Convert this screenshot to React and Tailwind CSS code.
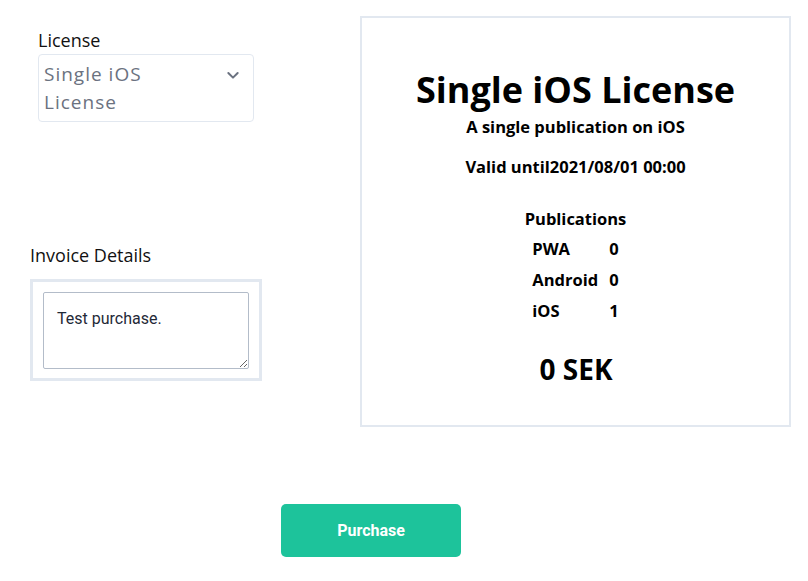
import React from 'react';

const rows = [
    { name: 'PWA', count: 0 },
    { name: 'Android', count: 0 },
    { name: 'iOS', count: 1 },
];

export default function App() {
    return (
        <div className="w-[808px] h-[581px] bg-white text-black font-['Open_Sans',sans-serif] relative">
            <div className="flex">
                {/* left column */}
                <div className="w-[232px] ml-[30px] pt-[28px]">
                    <label className="block pl-[8px] text-[18px] leading-[24px] text-[#111]">License</label>
                    <div className="ml-[8px] mt-[2px] w-[216px] h-[68px] border border-[#e2e8f0] rounded-[4px] flex items-start justify-between pl-[5px] pr-[12px] pt-[5px]">
                        <span className="text-[19px] leading-[28px] tracking-[1px] text-[#6b7280]">Single iOS<br />License</span>
                        <svg width="16" height="16" viewBox="0 0 24 24" fill="none" stroke="#6b7280" strokeWidth="3" strokeLinecap="round" strokeLinejoin="round" className="mt-[7px]">
                            <path d="M5 9l7 7 7-7" />
                        </svg>
                    </div>

                    <div className="mt-[121px] text-[18px] leading-[24px] text-[#111]">Invoice Details</div>
                    <div className="mt-[12px] w-[232px] h-[102px] border-[3px] border-[#e2e8f0] pt-[10px] pl-[10px]">
                        <textarea
                            defaultValue="Test purchase."
                            className="block w-[206px] h-[77px] border border-[#b3bcc9] rounded-[2px] px-[13px] py-[16px] text-[16px] leading-[20px] text-[#1f2937] font-['Roboto',sans-serif] outline-none resize-y"
                        />
                    </div>
                </div>

                {/* license card */}
                <div className="ml-[98px] mt-[16px] w-[431px] h-[411px] border-2 border-[#e2e8f0] flex flex-col items-center font-bold">
                    <h1 className="mt-[49px] text-[36px] leading-[46px]">Single iOS License</h1>
                    <p className="mt-[2px] text-[16.5px] leading-[24px]">A single publication on iOS</p>
                    <p className="mt-[16px] text-[16.5px] leading-[24px]">Valid until2021/08/01 00:00</p>
                    <p className="mt-[28px] text-[16.5px] leading-[24px]">Publications</p>
                    <div className="mt-[6px] flex flex-col gap-[7px] text-[16.5px] leading-[24px]">
                        {rows.map(r => (
                            <div key={r.name} className="flex">
                                <span className="w-[77px]">{r.name}</span>
                                <span>{r.count}</span>
                            </div>
                        ))}
                    </div>
                    <p className="mt-[28px] text-[28px] leading-[36px] ml-[1px]">0 SEK</p>
                </div>
            </div>

            <div className="flex pl-[281px] mt-[77px]">
                <button className="w-[180px] h-[53px] rounded-[5px] bg-[#1dc39b] text-white text-[16px] font-bold font-['Roboto',sans-serif]">
                    Purchase
                </button>
            </div>
        </div>
    );
}
